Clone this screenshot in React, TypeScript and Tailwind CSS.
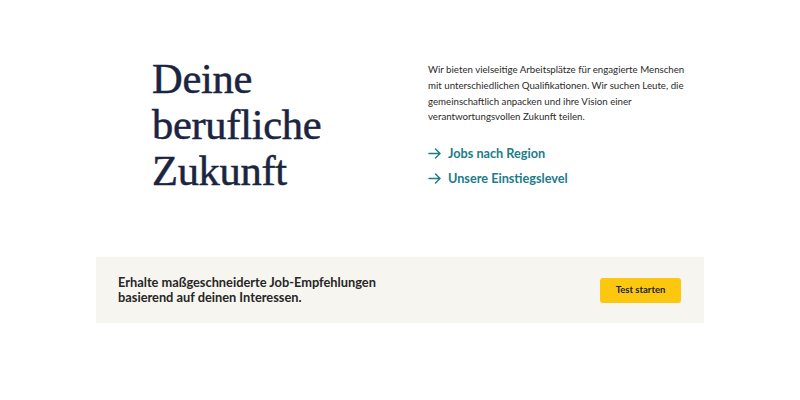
import React from "react";

const Arrow = () => (
  <svg width="13" height="11" viewBox="0 0 13 11" fill="none" stroke="currentColor" strokeWidth="1.5" strokeLinecap="round" strokeLinejoin="round">
    <path d="M1 5.5h11M7.5 1l4.5 4.5L7.5 10" />
  </svg>
);

export default function App() {
  return (
    <div className="w-[800px] h-[400px] bg-white overflow-hidden font-['Lato',sans-serif]">
      <div className="mx-auto w-[608px]">
        {/* Top: heading + intro */}
        <div className="flex pt-[56px] pl-[56px] h-[257px]">
          <h1 className="w-[276px] font-['Liberation_Serif',serif] text-[42.5px] leading-[46px] text-[#1b2440] tracking-[-0.3px] [-webkit-text-stroke:0.5px_#1b2440]">
            Deine
            <br />
            berufliche
            <br />
            Zukunft
          </h1>
          <div className="w-[268px] pt-[6px]">
            <p className="text-[9.7px] leading-[15.8px] text-[#2a2a2a]">
              Wir bieten vielseitige Arbeitsplätze für engagierte Menschen mit unterschiedlichen Qualifikationen. Wir suchen Leute, die gemeinschaftlich anpacken und ihre Vision einer verantwortungsvollen Zukunft teilen.
            </p>
            <div className="mt-[19px] flex flex-col gap-[6px] text-[#207c88] font-bold text-[12.7px]">
              <a className="flex items-center gap-[7px]">
                <Arrow />
                Jobs nach Region
              </a>
              <a className="flex items-center gap-[7px]">
                <Arrow />
                Unsere Einstiegslevel
              </a>
            </div>
          </div>
        </div>

        {/* Banner */}
        <div className="flex items-center justify-between bg-[#f7f5f0] h-[66px] pl-[22px] pr-[23px]">
          <p className="text-[12.8px] leading-[15px] font-bold text-[#262626]">
            Erhalte maßgeschneiderte Job-Empfehlungen
            <br />
            basierend auf deinen Interessen.
          </p>
          <button className="w-[81px] h-[25px] rounded-[3px] bg-[#fbc80f] text-[9.5px] font-bold text-[#222]">
            Test starten
          </button>
        </div>
      </div>
    </div>
  );
}
